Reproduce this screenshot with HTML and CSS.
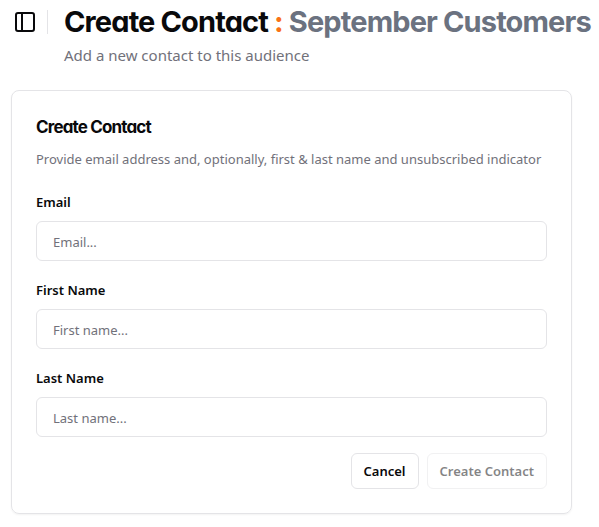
FILE: index.html
```html
<!DOCTYPE html>
<html lang="en">
<head>
<meta charset="utf-8">
<meta name="viewport" content="width=device-width, initial-scale=1">
<title>Create Contact</title>
<link rel="stylesheet" href="styles.css">
</head>
<body>
<header class="page-header">
  <button class="sidebar-toggle" type="button" aria-label="Toggle sidebar">
    <svg viewBox="0 0 24 24" width="24" height="24" fill="none" stroke="currentColor" stroke-width="2" stroke-linecap="round" stroke-linejoin="round" aria-hidden="true"><rect x="3" y="3" width="18" height="18" rx="2"/><path d="M9 3v18"/></svg>
  </button>
  <span class="divider"></span>
  <div class="heading">
    <h1 class="title">Create Contact <span class="colon">:</span> <span class="audience">September Customers</span></h1>
    <p class="subtitle">Add a new contact to this audience</p>
  </div>
</header>
<main class="content">
  <form class="card">
    <h2 class="card-title">Create Contact</h2>
    <p class="description">Provide email address and, optionally, first &amp; last name and unsubscribed indicator</p>
    <div class="fields">
      <div class="field">
        <label for="email">Email</label>
        <input id="email" type="email" placeholder="Email...">
      </div>
      <div class="field">
        <label for="first-name">First Name</label>
        <input id="first-name" type="text" placeholder="First name...">
      </div>
      <div class="field">
        <label for="last-name">Last Name</label>
        <input id="last-name" type="text" placeholder="Last name...">
      </div>
    </div>
    <div class="actions">
      <button class="button" type="button">Cancel</button>
      <button class="button" type="submit" disabled>Create Contact</button>
    </div>
  </form>
</main>
</body>
</html>
```
FILE: styles.css
```css
* {
  box-sizing: border-box;
}

body {
  margin: 0;
  background: #fff;
  color: #09090b;
  font-family: "Noto Sans", sans-serif;
  font-size: 13px;
  line-height: 20px;
}

h1,
h2,
p {
  margin: 0;
}

.page-header {
  display: flex;
  align-items: flex-start;
  padding: 4px 8px 0 13px;
}

.sidebar-toggle {
  display: flex;
  flex: none;
  margin-top: 6px;
  padding: 0;
  border: 0;
  background: none;
  color: inherit;
}

.divider {
  flex: none;
  width: 1px;
  height: 24px;
  margin: 6px 16px 0 10px;
  background: #e4e4e7;
}

.title,
.card-title {
  font-family: Inter, sans-serif;
  font-feature-settings: "cv11";
  font-weight: 700;
}

.title {
  font-size: 29px;
  line-height: 36px;
  letter-spacing: -0.03em;
  white-space: nowrap;
}

.colon {
  color: #f97316;
}

.audience {
  color: #6b7280;
}

.subtitle {
  margin-top: 3px;
  color: #71717a;
  font-size: 15px;
  line-height: 24px;
}

.content {
  padding: 23px 27px 12px 11px;
}

.card {
  padding: 24px;
  border: 1px solid #e4e4e7;
  border-radius: 8px;
  box-shadow: 0 1px 2px rgb(0 0 0 / 5%);
}

.card-title {
  font-size: 17px;
  line-height: 24px;
  letter-spacing: -0.05em;
}

.description {
  margin-top: 10px;
  color: #71717a;
}

.fields {
  display: grid;
  gap: 20px;
  margin-top: 24px;
}

.field {
  display: grid;
  gap: 10px;
}

label {
  font-weight: 600;
  line-height: 18px;
}

input {
  width: 100%;
  height: 40px;
  padding: 2px 16px 0;
  border: 1px solid #e4e4e7;
  border-radius: 6px;
  background: #fff;
  color: inherit;
  font: inherit;
}

input::placeholder {
  color: #71717a;
}

.actions {
  display: flex;
  justify-content: flex-end;
  gap: 8px;
  margin-top: 16px;
}

.button {
  height: 36px;
  padding: 0 12px;
  border: 1px solid #e4e4e7;
  border-radius: 6px;
  background: #fff;
  color: #09090b;
  font: inherit;
  font-weight: 600;
}

.button:disabled {
  opacity: 0.5;
}
```
